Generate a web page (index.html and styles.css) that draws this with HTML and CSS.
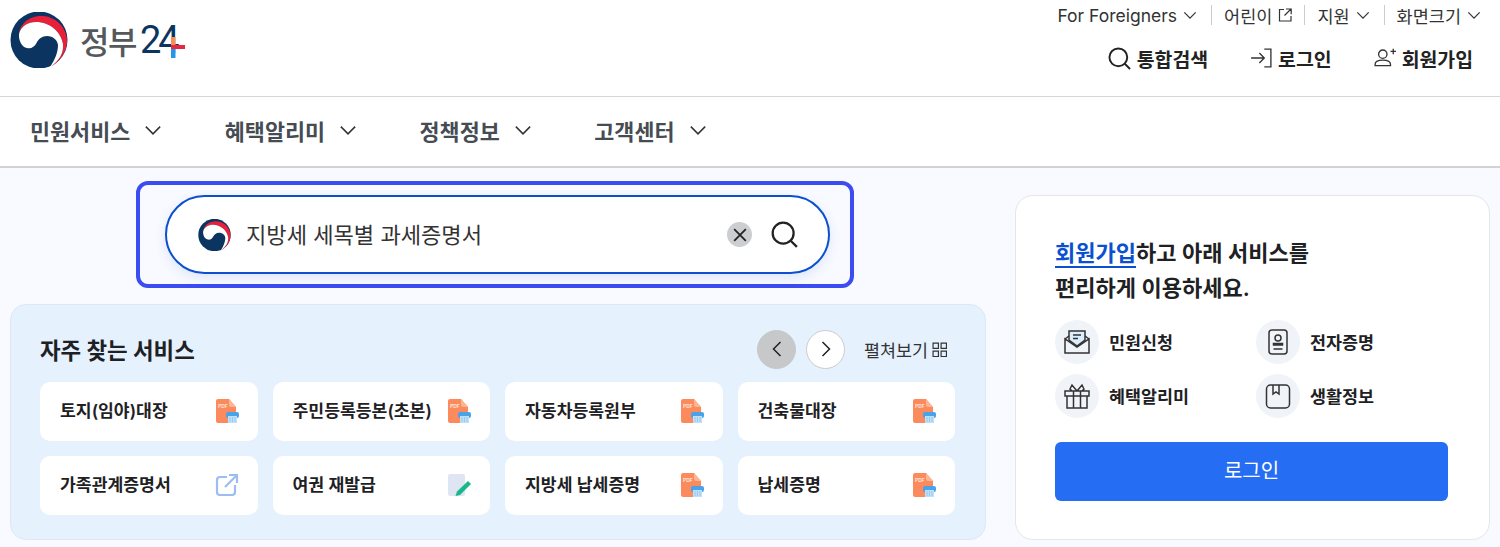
FILE: index.html
```html
<!DOCTYPE html>
<html lang="ko">
<head>
    <meta charset="UTF-8">
    <meta name="viewport" content="width=device-width, initial-scale=1.0">
    <title>정부24</title>
    <link rel="stylesheet" href="styles.css">
</head>
<body>
    <svg class="defs" width="0" height="0" aria-hidden="true">
        <symbol id="taegeuk" viewBox="0 0 58 56">
            <circle cx="29" cy="28" r="28.5" fill="#0b3560"/>
            <path d="M9 22C10 10 22 3 33 4C47 5 57.500 17 57 30C56.500 40 50 50 40 55C49 49 54 41 53 32C51 20 40 10 26 10C18 10 11 14 9 22Z" fill="#e8203a"/>
            <path d="M9 22C11 14 18 10 26 10C40 10 51 20 53 32C54 41 49 49 40 55C45 48 48 40 48 33C47.500 28 43 24 37 24C32 24 28.500 27 26.500 31C24.500 35 21 37 17 36C12 35 8.500 29 9 22Z" fill="#fff"/>
        </symbol>
        <symbol id="pdf" viewBox="0 0 24 24">
            <path d="M3 0H14L21 8V22Q21 24 19 24H3Q1 24 1 22V2Q1 0 3 0Z" fill="#fb8a5c"/>
            <path d="M14 0L21 8H16Q14 8 14 6Z" fill="#fdb594"/>
            <rect x="11" y="13" width="13" height="6" rx="2" fill="#4aa3e8"/>
            <rect x="13" y="17" width="9" height="7" fill="#bfe0f8"/>
            <path d="M15 18V23M17.500 18V23M20 18V23" stroke="#8cc4ee" stroke-width=".8"/>
        </symbol>
        <symbol id="chev" viewBox="0 0 16 10">
            <path d="M1.500 1.500L8 8L14.500 1.500" fill="none" stroke="currentColor" stroke-width="1.400"/>
        </symbol>
        <symbol id="search" viewBox="0 0 24 24">
            <circle cx="10.800" cy="10.800" r="9.300" fill="none" stroke="currentColor" stroke-width="2"/>
            <path d="M17.500 17.500L23 23" fill="none" stroke="currentColor" stroke-width="2"/>
        </symbol>
    </svg>

    <header class="top">
        <a class="logo" href="#">
            <svg class="logo-mark"><use href="#taegeuk"/></svg>
            <span class="logo-name">정부</span><span class="logo-num">24</span>
            <svg class="logo-plus" viewBox="0 0 14 21">
                <rect x="0" width="4.500" height="10" fill="#f98d55"/>
                <rect x="0" y="11" width="4.500" height="10" fill="#2a95e8"/>
                <rect x="0" y="8" width="14" height="4" fill="#e7293f"/>
            </svg>
        </a>
        <div class="top-right">
            <ul class="util">
                <li>For Foreigners <svg class="chev-sm"><use href="#chev"/></svg></li>
                <li>어린이
                    <svg class="ext" viewBox="0 0 14 14"><path d="M6 1.500H1.500V13H13V8M8 1H13.200V6.200M13 1L6.500 7.500" fill="none" stroke="currentColor" stroke-width="1.200"/></svg>
                </li>
                <li>지원 <svg class="chev-sm"><use href="#chev"/></svg></li>
                <li>화면크기 <svg class="chev-sm"><use href="#chev"/></svg></li>
            </ul>
            <div class="actions">
                <a href="#"><svg class="act-search"><use href="#search"/></svg>통합검색</a>
                <a href="#">
                    <svg class="act-icon" viewBox="0 0 20 18"><path d="M1 9H13M8.500 4.500L13 9L8.500 13.500M13 1H19V17H13" fill="none" stroke="currentColor" stroke-width="1.200"/></svg>
                    로그인
                </a>
                <a href="#">
                    <svg class="act-icon" viewBox="0 0 20 18"><circle cx="8" cy="5.500" r="3.800" fill="none" stroke="currentColor" stroke-width="1.200"/><path d="M1 16V15C1 12.500 4 11 8 11C12 11 15 12.500 15 15V16H1ZM15 3H20M17.500 .5V5.500" fill="none" stroke="currentColor" stroke-width="1.200"/></svg>
                    회원가입
                </a>
            </div>
        </div>
    </header>

    <nav class="gnb">
        <a href="#">민원서비스 <svg class="chev-lg"><use href="#chev"/></svg></a>
        <a href="#">혜택알리미 <svg class="chev-lg"><use href="#chev"/></svg></a>
        <a href="#">정책정보 <svg class="chev-lg"><use href="#chev"/></svg></a>
        <a href="#">고객센터 <svg class="chev-lg"><use href="#chev"/></svg></a>
    </nav>

    <main class="content">
        <div class="left">
            <div class="search-focus">
                <div class="search-box">
                    <svg class="search-mark"><use href="#taegeuk"/></svg>
                    <span class="search-text">지방세 세목별 과세증명서</span>
                    <span class="search-clear">
                        <svg viewBox="0 0 12 12"><path d="M1 1L11 11M11 1L1 11" fill="none" stroke="#222" stroke-width="1.500"/></svg>
                    </span>
                    <svg class="search-go"><use href="#search"/></svg>
                </div>
            </div>

            <section class="services">
                <div class="services-head">
                    <h2>자주 찾는 서비스</h2>
                    <button class="round round-off">
                        <svg viewBox="0 0 10 16"><path d="M8.500 1L1.500 8L8.500 15" fill="none" stroke="#222" stroke-width="1.500"/></svg>
                    </button>
                    <button class="round">
                        <svg viewBox="0 0 10 16"><path d="M1.500 1L8.500 8L1.500 15" fill="none" stroke="#222" stroke-width="1.500"/></svg>
                    </button>
                    <span class="expand">펼쳐보기
                        <svg viewBox="0 0 14 14"><path d="M1 1H6V6H1ZM8.500 1H13.500V6H8.500ZM1 8.500H6V13.500H1ZM8.500 8.500H13.500V13.500H8.500Z" fill="none" stroke="#333" stroke-width="1.100"/></svg>
                    </span>
                </div>
                <div class="service-grid">
                    <a class="service" href="#">토지(임야)대장
                        <svg class="sv-icon" viewBox="0 0 24 24"><use href="#pdf"/><text class="pdf-tag" x="3" y="9">PDF</text></svg>
                    </a>
                    <a class="service" href="#">주민등록등본(초본)
                        <svg class="sv-icon" viewBox="0 0 24 24"><use href="#pdf"/><text class="pdf-tag" x="3" y="9">PDF</text></svg>
                    </a>
                    <a class="service" href="#">자동차등록원부
                        <svg class="sv-icon" viewBox="0 0 24 24"><use href="#pdf"/><text class="pdf-tag" x="3" y="9">PDF</text></svg>
                    </a>
                    <a class="service" href="#">건축물대장
                        <svg class="sv-icon" viewBox="0 0 24 24"><use href="#pdf"/><text class="pdf-tag" x="3" y="9">PDF</text></svg>
                    </a>
                    <a class="service" href="#">가족관계증명서
                        <svg class="sv-icon" viewBox="0 0 24 24"><path d="M12 4H5Q2 4 2 7V19Q2 22 5 22H17Q20 22 20 19V12M14 2H22V10M22 2L10 14" fill="none" stroke="#9dbcf2" stroke-width="2.200"/></svg>
                    </a>
                    <a class="service" href="#">여권 재발급
                        <svg class="sv-icon" viewBox="0 0 24 24">
                            <rect x="1" y="1" width="17" height="22" rx="2" fill="#dfe5f3"/>
                            <path d="M21 8L24 11L13 22L8.500 23L10 18.500Z" fill="#17b98a"/>
                        </svg>
                    </a>
                    <a class="service" href="#">지방세 납세증명
                        <svg class="sv-icon" viewBox="0 0 24 24"><use href="#pdf"/><text class="pdf-tag" x="3" y="9">PDF</text></svg>
                    </a>
                    <a class="service" href="#">납세증명
                        <svg class="sv-icon" viewBox="0 0 24 24"><use href="#pdf"/><text class="pdf-tag" x="3" y="9">PDF</text></svg>
                    </a>
                </div>
            </section>
        </div>

        <aside class="join">
            <p class="join-msg"><a href="#">회원가입</a>하고 아래 서비스를<br>편리하게 이용하세요.</p>
            <ul class="join-list">
                <li>
                    <span class="join-icon">
                        <svg viewBox="0 0 26 26" fill="none" stroke="#333" stroke-width="1.500">
                            <path d="M5 11V2H21V11L13 17Z" fill="#d9eefc"/>
                            <path d="M1 10L5 7M25 10L21 7M1 10V24H25V10L13 18Z"/>
                            <path d="M9 6H17M9 9.500H14"/>
                        </svg>
                    </span><span class="join-label">민원신청</span>
                </li>
                <li>
                    <span class="join-icon">
                        <svg viewBox="0 0 26 26" fill="none" stroke="#333" stroke-width="1.500">
                            <rect x="4" y="1" width="18" height="24" rx="3"/>
                            <circle cx="13" cy="9" r="3"/>
                            <path d="M8.500 16V14.500H17.500V16ZM8.500 20H17.500"/>
                        </svg>
                    </span><span class="join-label">전자증명</span>
                </li>
                <li>
                    <span class="join-icon">
                        <svg viewBox="0 0 26 26" fill="none" stroke="#333" stroke-width="1.500">
                            <path d="M1 8H25V13H1ZM3 13V25H23V13M9.500 8V25M16.500 8V25M13 8L8 2L6 6L8 8M13 8L18 2L20 6L18 8"/>
                        </svg>
                    </span><span class="join-label">혜택알리미</span>
                </li>
                <li>
                    <span class="join-icon">
                        <svg viewBox="0 0 26 26" fill="none" stroke="#333" stroke-width="1.500">
                            <rect x="1.500" y="2" width="23" height="23" rx="4"/>
                            <path d="M8 2V11L11 9L14 11V2"/>
                        </svg>
                    </span><span class="join-label">생활정보</span>
                </li>
            </ul>
            <button class="login-btn">로그인</button>
        </aside>
    </main>
</body>
</html>
```

FILE: styles.css
```css
body {
    margin: 0;
    padding: 0;
    background-color: #fff;
    color: #1e2124;
    font-family: Inter, "Noto Sans CJK KR", sans-serif;
    overflow: hidden;
}

a {
    color: inherit;
    text-decoration: none;
}

ul {
    list-style: none;
    margin: 0;
    padding: 0;
}

.defs {
    position: absolute;
}

/* top */
.top {
    height: 96px;
    display: flex;
    justify-content: space-between;
    border-bottom: 1px solid #d6d6d6;
}

.logo {
    display: flex;
    align-items: center;
    height: 80px;
    padding-left: 10px;
}

.logo-mark {
    width: 58px;
    height: 56px;
    margin-right: 12px;
}

.logo-name {
    font-size: 32px;
    font-weight: 500;
    color: #55585c;
    letter-spacing: -1.500px;
}

.logo-num {
    margin-left: 4px;
    font-family: Roboto, sans-serif;
    font-size: 38px;
    font-weight: 400;
    color: #0b3560;
    letter-spacing: -3px;
}

.logo-plus {
    width: 14px;
    height: 21px;
    margin-left: -6px;
    margin-top: 15px;
}

.top-right {
    display: flex;
    flex-direction: column;
    align-items: flex-end;
    padding-right: 19px;
}

.util {
    display: flex;
    align-items: center;
    height: 30px;
    font-size: 17.500px;
    color: #333;
}

.util li {
    display: flex;
    align-items: center;
    gap: 6px;
    height: 20px;
    padding: 0 0 0 12px;
    margin-left: 14px;
    border-left: 1px solid #ccc;
}

.util li:first-child {
    border-left: 0;
    padding-left: 0;
    margin-left: 0;
}

.chev-sm {
    width: 14px;
    height: 9px;
}

.ext {
    width: 14px;
    height: 14px;
    margin-right: -2px;
}

.actions {
    display: flex;
    align-items: center;
    gap: 42px;
    height: 56px;
    margin-right: 8px;
    font-size: 19.400px;
    font-weight: 700;
    color: #222;
}

.actions a {
    display: flex;
    align-items: center;
    gap: 6px;
}

.act-search {
    width: 23px;
    height: 23px;
}

.act-icon {
    width: 22px;
    height: 20px;
    color: #333;
}

/* gnb */
.gnb {
    box-sizing: border-box;
    height: 71px;
    display: flex;
    align-items: center;
    gap: 62.500px;
    padding: 0 0 3px 30px;
    border-bottom: 2px solid #d0d2d6;
    font-size: 21.800px;
    font-weight: 700;
    color: #464c53;
}

.gnb a {
    display: flex;
    align-items: center;
    gap: 14px;
}

.chev-lg {
    width: 18px;
    height: 11px;
    color: #333;
}

/* main */
.content {
    display: flex;
    gap: 29px;
    height: 380px;
    padding: 13px 10px 0 10px;
    background-color: #f8faff;
}

.left {
    width: 976px;
}

.search-focus {
    box-sizing: border-box;
    width: 718px;
    height: 107px;
    margin-left: 126px;
    padding: 10px 20px 0 25px;
    border: 4px solid #3b4cf0;
    border-radius: 12px;
}

.search-box {
    box-sizing: border-box;
    height: 79px;
    display: flex;
    align-items: center;
    padding: 0 30px 0 31px;
    background-color: #fff;
    border: 2px solid #0b50d0;
    border-radius: 40px;
    box-shadow: 0 4px 12px rgba(40, 80, 200, 0.12);
}

.search-mark {
    width: 33px;
    height: 32px;
}

.search-text {
    flex: 1;
    margin-left: 15px;
    padding-bottom: 4px;
    font-size: 22.100px;
    color: #333;
}

.search-clear {
    display: flex;
    align-items: center;
    justify-content: center;
    width: 25px;
    height: 25px;
    border-radius: 50%;
    background-color: #ccced1;
}

.search-clear svg {
    width: 14px;
    height: 14px;
}

.search-go {
    width: 27px;
    height: 27px;
    margin-left: 19px;
    color: #222;
}

.services {
    box-sizing: border-box;
    height: 236px;
    margin-top: 16px;
    padding: 24px 30px 24px 29px;
    background-color: #e5f1fd;
    border: 1px solid #dde8f5;
    border-radius: 16px;
}

.services-head {
    display: flex;
    align-items: center;
    height: 40px;
    margin-bottom: 13px;
}

.services-head h2 {
    flex: 1;
    margin: 0;
    font-size: 22.400px;
    font-weight: 700;
    color: #1e2124;
}

.round {
    width: 39px;
    height: 39px;
    margin-left: 10px;
    padding: 0;
    display: flex;
    align-items: center;
    justify-content: center;
    background-color: #fff;
    border: 1px solid #ccc;
    border-radius: 50%;
}

.round svg {
    width: 10px;
    height: 16px;
}

.round-off {
    background-color: #c6c8ca;
    border-color: #c6c8ca;
}

.expand {
    display: flex;
    align-items: center;
    gap: 4px;
    margin-left: 19px;
    margin-right: 8px;
    font-size: 17.400px;
    color: #333;
}

.expand svg {
    width: 15px;
    height: 15px;
}

.service-grid {
    display: grid;
    grid-template-columns: repeat(4, 1fr);
    grid-auto-rows: 59px;
    column-gap: 15px;
    row-gap: 15px;
}

.service {
    display: flex;
    align-items: center;
    justify-content: space-between;
    padding: 0 19px 4px 20px;
    background-color: #fff;
    border-radius: 10px;
    font-size: 17.200px;
    font-weight: 600;
    color: #1e2124;
}

.sv-icon {
    width: 24px;
    height: 24px;
    margin-top: 3px;
}

.pdf-tag {
    font-size: 5px;
    font-weight: 700;
    fill: #fde3d6;
}

/* join */
.join {
    box-sizing: border-box;
    width: 475px;
    height: 345px;
    margin-top: 14px;
    padding: 40px 39px 0;
    background-color: #fff;
    border: 1px solid #e4e6ea;
    border-radius: 18px;
}

.join-msg {
    margin: 0;
    font-size: 22px;
    font-weight: 600;
    line-height: 35px;
    color: #1e2124;
}

.join-msg a {
    color: #0b50d0;
    border-bottom: 2px solid #0b50d0;
}

.join-list {
    display: grid;
    grid-template-columns: 201px 1fr;
    row-gap: 10px;
    margin-top: 14px;
}

.join-list li {
    display: flex;
    align-items: center;
    gap: 10px;
}

.join-label {
    padding-bottom: 2px;
    font-size: 17.400px;
    font-weight: 600;
}

.join-icon {
    display: flex;
    align-items: center;
    justify-content: center;
    width: 44px;
    height: 44px;
    border-radius: 50%;
    background-color: #f0f3f8;
}

.join-icon svg {
    width: 26px;
    height: 26px;
}

.login-btn {
    display: block;
    width: 393px;
    height: 59px;
    margin-top: 24px;
    padding-bottom: 5px;
    background-color: #256ef4;
    border: 0;
    border-radius: 6px;
    color: #fff;
    font-family: inherit;
    font-size: 20px;
}
```
